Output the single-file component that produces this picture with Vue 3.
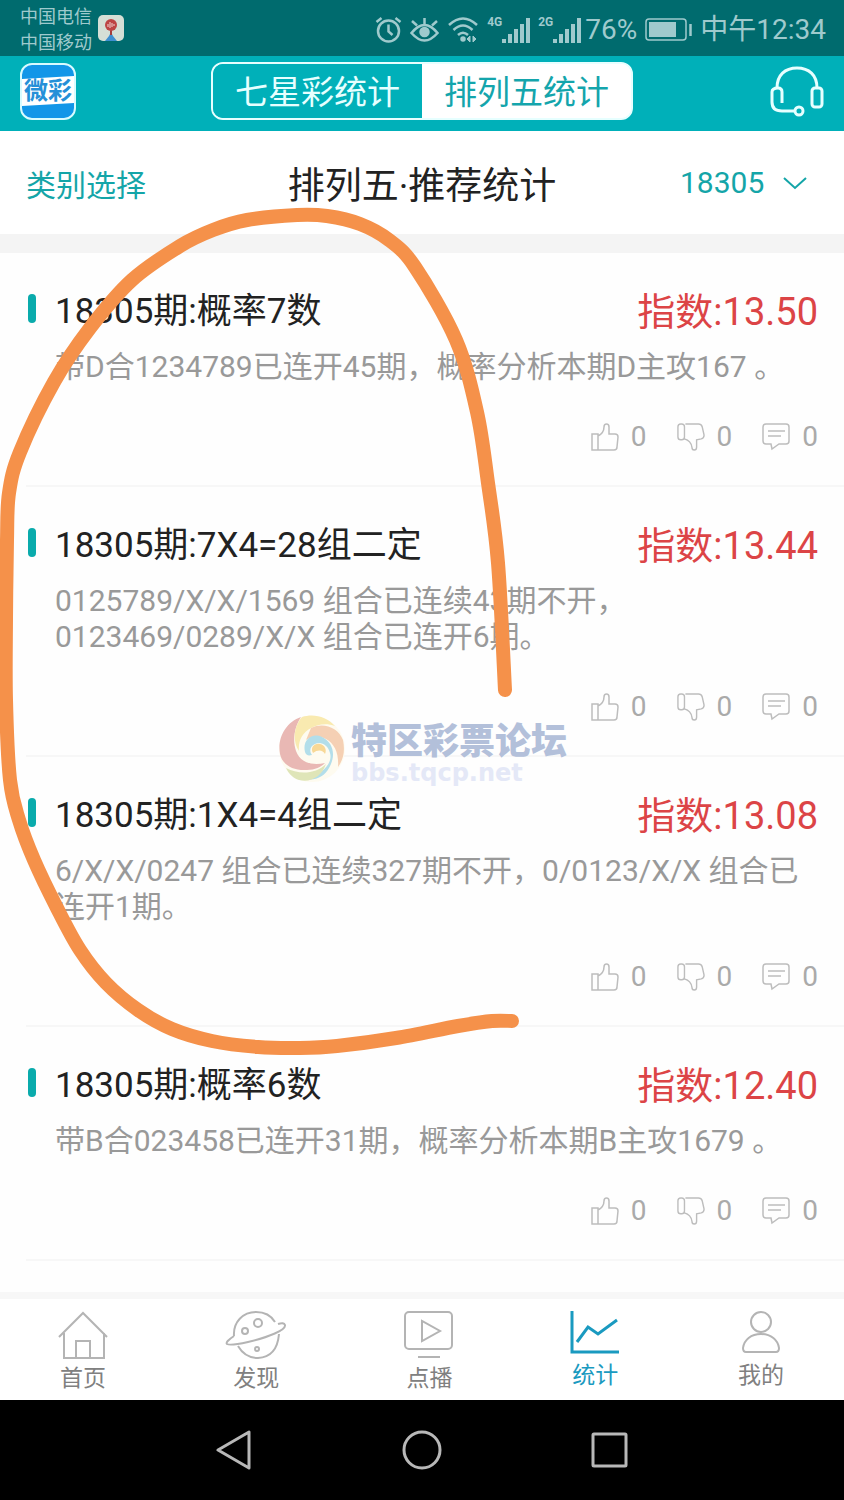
<template>
  <div class="phone">
    <div class="status_bar">
      <div class="carriers">
        <span>中国电信</span>
        <span>中国移动</span>
      </div>
      <svg class="app_notice" width="26" height="26" viewBox="0 0 26 26">
        <rect width="26" height="26" rx="5" fill="#d5dfd6" />
        <path d="M7 26l4-5 2-4 2 4 4 5z" fill="#3e8fd0" />
        <path d="M12 14h2v6h-2z" fill="#a33c3c" />
        <circle cx="13" cy="10" r="6" fill="#bd4545" />
        <path d="M10 9v3M12 7v6M14 8v4M16 9v2" stroke="#f0d8d4" fill="none" />
      </svg>
      <div class="status_right">
        <svg width="27" height="28" viewBox="0 0 27 28" class="line_ico">
          <circle cx="13.500" cy="15" r="10.500" />
          <path d="M13.500 8.500v7l4 3.500M1.500 6l5-4M25.500 6l-5-4" />
        </svg>
        <svg width="29" height="28" viewBox="0 0 29 28" class="line_ico">
          <path d="M1.500 17q13-16 26 0q-13 15-26 0zM14.500 8V2M7 9.500L2 5M22 9.500l5-4.500" />
          <circle cx="14.500" cy="16" r="4" fill="#9fcacd" />
        </svg>
        <svg width="32" height="28" viewBox="0 0 32 28" class="line_ico">
          <path d="M2 9q14-13 28 0M6.500 14q9.500-9 19 0M11 19q5-4.500 10 0" />
          <circle cx="16" cy="23" r="1.500" fill="#9fcacd" />
          <path d="M23 20l-3 3 3 3zM26 20l3 3-3 3z" stroke-width="1" fill="#9fcacd" />
        </svg>
        <div class="signal" v-for="net in networks" :key="net">
          <span>{{ net }}</span>
          <svg width="28" height="28" viewBox="0 0 28 28">
            <path d="M2 23v4M8 18v9M14 13v14M20 8v19M26 2v25" stroke="#9fcacd" stroke-width="4" />
          </svg>
        </div>
        <span class="battery_text">76%</span>
        <svg width="47" height="24" viewBox="0 0 47 24" class="battery">
          <rect x="1" y="1" width="40" height="21" rx="3" fill="none" stroke="#9fcacd" stroke-width="1.500" />
          <rect x="4" y="4" width="27" height="15" fill="#9fcacd" />
          <path d="M45.500 6v12" stroke="#9fcacd" stroke-width="2.500" />
        </svg>
        <span>中午12:34</span>
      </div>
    </div>

    <header class="top_bar">
      <svg width="56" height="57" viewBox="0 0 56 57" class="logo">
        <rect x="1" y="1" width="54" height="55" rx="11" fill="#1296e8" stroke="#d8fbff" stroke-width="2" />
        <path d="M2 16l52-3v27l-52 3z" fill="#fff" />
        <text x="28" y="36" text-anchor="middle">微彩</text>
      </svg>
      <div class="segment">
        <button
          v-for="name in games"
          :key="name"
          :class="{ on: game === name }"
          @click="game = name"
        >{{ name }}</button>
      </div>
      <button class="service" aria-label="客服">
        <svg width="54" height="52" viewBox="0 0 54 52">
          <path d="M7 23C7 10 15 3 27 3s20 7 20 20" />
          <path d="M12 38V27q0-4-4-4-6 0-6 4v10Q2 46 12 46h13" />
          <rect x="42" y="23" width="10" height="19" rx="3" />
          <circle cx="29" cy="46" r="4" />
        </svg>
      </button>
    </header>

    <div class="title_row">
      <button class="category">类别选择</button>
      <h1>排列五·推荐统计</h1>
      <label class="issue">
        <select v-model="issue" aria-label="期号">
          <option>18305</option>
        </select>
        <svg width="24" height="14" viewBox="0 0 24 14">
          <path d="M1 2l11 10L23 2" />
        </svg>
      </label>
    </div>

    <main class="list">
      <article class="item" v-for="item in items" :key="item.title">
        <div class="item_head">
          <h2>{{ item.title }}</h2>
          <span class="score">指数:{{ item.score }}</span>
        </div>
        <p>{{ item.text }}</p>
        <div class="actions">
          <button aria-label="赞">
            <svg width="28" height="30" viewBox="0 0 28 30">
              <path d="M1 12h6v16H1zM10 28h13q3 0 3-3l1-10q0-3-3-3h-6V5q0-3-2.500-3T13 5q0 6-6 9M7 28h3" />
            </svg>
            0
          </button>
          <button aria-label="踩">
            <svg width="28" height="30" viewBox="0 0 30 30">
              <path d="M4 1h1q3 0 3 3v11q0 3-3 3H4q-3 0-3-3V4q0-3 3-3zM9 1h14q3 0 4 3l2 9q0 3-3 4l-5 1v8q0 3-2.500 3T16 26q-1-7-8-9" />
            </svg>
            0
          </button>
          <button aria-label="评论">
            <svg width="28" height="30" viewBox="0 0 28 30">
              <path d="M4 2h20q3 0 3 3v14q0 3-3 3h-7l-7 5-1-5H4q-3 0-3-3V5q0-3 3-3zM6 9h17M6 14h13" />
            </svg>
            0
          </button>
        </div>
      </article>
    </main>

    <nav class="tab_bar">
      <a href="#" class="tab">
        <svg width="50" height="48" viewBox="0 0 50 48">
          <path d="M1 26L25 2l24 24M6 22v25h40V22M18 47V30h14v17" />
        </svg>
        首页
      </a>
      <a href="#" class="tab">
        <svg width="62" height="48" viewBox="0 0 62 48">
          <path d="M9 25C8 11 18 1 31 1q13 0 19 10M9 25q-9 6-7 8 3 2 21-2C44 26 61 19 60 14q-1-3-7-1M13 35q7 12 20 12 19-1 21-24" />
          <circle cx="33" cy="12" r="4" />
          <circle cx="20" cy="20" r="3" />
          <circle cx="32" cy="38" r="2" />
        </svg>
        发现
      </a>
      <a href="#" class="tab">
        <svg width="50" height="48" viewBox="0 0 50 48">
          <rect x="1" y="1" width="47" height="37" rx="4" />
          <path d="M18 10v20l18-10zM14 46h22" />
        </svg>
        点播
      </a>
      <a href="#" class="tab active">
        <svg width="50" height="45" viewBox="0 0 50 45">
          <path d="M2 0v41h47M7 31l11-15 10 7L47 9" />
        </svg>
        统计
      </a>
      <a href="#" class="tab">
        <svg width="50" height="45" viewBox="0 0 50 45">
          <circle cx="25" cy="11" r="10" />
          <path d="M25 23c-10 0-17 6-18 14q0 4 3 4h30q3 0 3-4c-1-8-8-14-18-14z" />
        </svg>
        我的
      </a>
    </nav>

    <div class="system_nav">
      <button aria-label="返回">
        <svg width="40" height="40" viewBox="0 0 40 40"><path d="M35 2v36L4 20z" /></svg>
      </button>
      <button aria-label="主屏幕">
        <svg width="40" height="40" viewBox="0 0 40 40"><circle cx="20" cy="20" r="18" /></svg>
      </button>
      <button aria-label="最近任务">
        <svg width="40" height="40" viewBox="0 0 40 40"><rect x="3" y="4" width="33" height="32" rx="1" /></svg>
      </button>
    </div>

    <!-- forum watermark -->
    <div class="watermark">
      <svg width="68" height="70" viewBox="0 0 68 70">
        <circle cx="34" cy="35" r="33" fill="#fefbf0" />
        <path d="M23 3C8 8-1 24 2 40c2 10 12 17 27 16 8 0 14-3 18-7-14 3-25-1-29-12C14 25 17 12 23 3z" fill="#e9b8b4" />
        <path d="M24 3c12-4 25 0 33 9-8-3-17-2-24 2-9 5-13 13-12 23-7-10-5-25 3-34z" fill="#f9eab0" />
        <path d="M33 14c12-6 27-1 32 12 2 10 1 19-5 27 1-13-3-23-12-28-7-4-14-3-20 1z" fill="#f5d0b4" />
        <path d="M27 38c-3-12 7-20 17-15 12 6 14 19 7 31-5 9-14 13-23 11 17-5 27-16 24-26-2-8-9-12-15-9-5 2-6 7-3 11-4 1-6 0-7-3z" fill="#b3deea" />
        <path d="M8 54c13 7 30 6 40-4-4 12-15 19-27 16C15 64 11 60 8 54z" fill="#dfe5b8" />
        <path d="M35 39c-3-5 1-10 7-9 5 1 7 6 5 10-2-4-7-5-12-1z" fill="#f8d896" />
      </svg>
      <div class="watermark_text">
        <strong>特区彩票论坛</strong>
        <span>bbs.tqcp.net</span>
      </div>
    </div>

    <!-- marker stroke -->
    <svg class="marker" width="844" height="1500" viewBox="0 0 844 1500">
      <path :d="markerPath" />
    </svg>
  </div>
</template>

<script setup>
import { ref } from "vue";

const networks = ["4G", "2G"];
const games = ["七星彩统计", "排列五统计"];
const game = ref("排列五统计");
const issue = ref("18305");

const items = [
  {
    title: "18305期:概率7数",
    score: "13.50",
    text: "带D合1234789已连开45期，概率分析本期D主攻167 。",
  },
  {
    title: "18305期:7X4=28组二定",
    score: "13.44",
    text: "0125789/X/X/1569 组合已连续43期不开，\n0123469/0289/X/X 组合已连开6期。",
  },
  {
    title: "18305期:1X4=4组二定",
    score: "13.08",
    text: "6/X/X/0247 组合已连续327期不开，0/0123/X/X 组合已\n连开1期。",
  },
  {
    title: "18305期:概率6数",
    score: "12.40",
    text: "带B合023458已连开31期，概率分析本期B主攻1679 。",
  },
];

const markerPoints = [
  [505, 690], [498, 563], [488, 483], [477, 412], [456, 340], [415, 267],
  [389, 240], [360, 224], [327, 216], [297, 215], [247, 220], [213, 230],
  [180, 246], [132, 280], [90, 328], [54, 382], [20, 452], [9, 493],
  [7, 540], [6, 620], [6, 700], [10, 780], [19, 820], [34, 860],
  [57, 908], [80, 950], [106, 983], [138, 1010], [172, 1029], [212, 1041],
  [258, 1047], [300, 1048], [337, 1046], [396, 1038], [458, 1026],
  [492, 1021], [512, 1021],
];

// smooth curve through all the points
const smooth = (pts) => {
  let d = `M${pts[0]}`;
  for (let i = 0; i < pts.length - 1; i++) {
    const p0 = pts[i - 1] || pts[i];
    const p1 = pts[i];
    const p2 = pts[i + 1];
    const p3 = pts[i + 2] || p2;
    const c1 = [p1[0] + (p2[0] - p0[0]) / 6, p1[1] + (p2[1] - p0[1]) / 6];
    const c2 = [p2[0] - (p3[0] - p1[0]) / 6, p2[1] - (p3[1] - p1[1]) / 6];
    d += `C${c1} ${c2} ${p2}`;
  }
  return d;
};
const markerPath = smooth(markerPoints);
</script>

<style>
body {
  margin: 0;
  background: #fff;
}
</style>

<style scoped>
.phone {
  position: relative;
  overflow: hidden;
  background: #fefefe;
  font-family: Roboto, "Noto Sans CJK SC", sans-serif;
  color: #222;
}
svg {
  display: block;
  flex-shrink: 0;
}
button,
select {
  font: inherit;
  color: inherit;
  background: none;
  border: 0;
  padding: 0;
  margin: 0;
}
h1,
h2,
p {
  margin: 0;
  font-weight: 400;
}

.status_bar {
  display: flex;
  align-items: center;
  height: 56px;
  padding: 0 18px 0 20px;
  background: #006b6e;
  color: #9fcacd;
}
.carriers {
  display: flex;
  flex-direction: column;
  font-size: 18px;
  line-height: 26px;
  padding-top: 3px;
}
.app_notice {
  margin-left: 6px;
}
.status_right {
  display: flex;
  align-items: center;
  gap: 8px;
  margin-left: auto;
  padding-top: 3px;
  font-size: 28px;
  line-height: 36px;
}
.line_ico {
  fill: none;
  stroke: #9fcacd;
  stroke-width: 2.5;
}
.signal {
  display: flex;
}
.signal span {
  font-size: 12px;
  font-weight: 700;
  line-height: 12px;
}
.battery_text {
  margin-left: -4px;
}

.top_bar {
  display: grid;
  grid-template-columns: 1fr auto 1fr;
  align-items: center;
  height: 75px;
  padding: 0 20px 5px;
  box-sizing: border-box;
  background: #00b0b9;
}
.logo text {
  font-size: 24px;
  font-weight: 700;
  fill: #2590d8;
}
.segment {
  display: flex;
  border: 2px solid #e6ffff;
  border-radius: 12px;
  overflow: hidden;
  background: linear-gradient(to right, transparent 50%, #fff 50%);
}
.segment button {
  width: 209px;
  height: 54px;
  padding-top: 4px;
  font-size: 33px;
  line-height: 50px;
  background: #00b0b9;
  color: #e6ffff;
}
.segment button.on {
  background: #fff;
  color: #14a5ac;
}
.service {
  justify-self: end;
}
.service svg {
  fill: none;
  stroke: #e6ffff;
  stroke-width: 3;
}

.title_row {
  display: grid;
  grid-template-columns: 1fr auto 1fr;
  align-items: center;
  height: 103px;
  padding: 0 26px;
  border-bottom: 19px solid #f4f4f4;
  background: #fff;
}
.category {
  justify-self: start;
  font-size: 30px;
  color: #14a5a8;
}
.title_row h1 {
  font-size: 37px;
}
.issue {
  display: flex;
  align-items: center;
  justify-self: end;
  gap: 18px;
  padding-right: 11px;
  font-size: 30px;
  color: #14a5a8;
}
.issue select {
  appearance: none;
}
.issue svg {
  fill: none;
  stroke: #14a5a8;
  stroke-width: 2;
}

.list {
  padding-bottom: 31px;
}
.item {
  margin-left: 26px;
  padding: 36px 26px 30px 29px;
  border-bottom: 2px solid #f7f7f7;
}
.item_head {
  position: relative;
  display: flex;
  justify-content: space-between;
  align-items: center;
  height: 46px;
  line-height: 46px;
}
.item_head::before {
  content: "";
  position: absolute;
  left: -27px;
  top: 5px;
  width: 8px;
  height: 29px;
  border-radius: 4px;
  background: #0aabac;
}
.item_head h2 {
  font-size: 35px;
}
.score {
  font-size: 38px;
  color: #dc4446;
}
.item p {
  margin-top: 14px;
  font-size: 30px;
  line-height: 36px;
  color: #999;
  white-space: pre-line;
}
.actions {
  display: flex;
  justify-content: flex-end;
  gap: 30px;
  margin-top: 34px;
}
.actions button {
  display: flex;
  align-items: center;
  gap: 12px;
  font-size: 28px;
  line-height: 36px;
  color: #aaa;
}
.actions svg {
  fill: none;
  stroke: #bdbdbd;
  stroke-width: 1.5;
}

.tab_bar {
  display: grid;
  grid-template-columns: 1fr 1.09fr 1fr 1fr 1fr;
  height: 89px;
  padding-top: 12px;
  border-top: 7px solid #f7f7f7;
  background: #fff;
}
.tab {
  display: flex;
  flex-direction: column;
  align-items: center;
  gap: 6px;
  font-size: 23px;
  line-height: 28px;
  color: #808080;
  text-decoration: none;
}
.tab svg {
  fill: none;
  stroke: #b4b4b4;
  stroke-width: 2;
}
.tab.active {
  color: #1a9ac0;
}
.tab.active svg {
  stroke: #1a9ac0;
  stroke-width: 3;
}

.system_nav {
  display: flex;
  justify-content: center;
  align-items: center;
  gap: 148px;
  height: 100px;
  background: #000;
}
.system_nav svg {
  fill: none;
  stroke: #b8b8b8;
  stroke-width: 3;
  stroke-linejoin: round;
}

.watermark {
  position: absolute;
  left: 278px;
  top: 714px;
  display: flex;
  gap: 5px;
  pointer-events: none;
}
.watermark_text {
  display: flex;
  flex-direction: column;
  padding-top: 8px;
}
.watermark_text strong {
  font-size: 36px;
  font-weight: 900;
  line-height: 40px;
  color: #b3c0da;
}
.watermark_text span {
  font-family: "DejaVu Sans", sans-serif;
  font-size: 24px;
  font-weight: 700;
  line-height: 22px;
  color: #e4e8f7;
}
.marker {
  position: absolute;
  left: 0;
  top: 0;
  pointer-events: none;
}
.marker path {
  fill: none;
  stroke: #f5914a;
  stroke-width: 14;
  stroke-linecap: round;
  stroke-linejoin: round;
}
</style>
